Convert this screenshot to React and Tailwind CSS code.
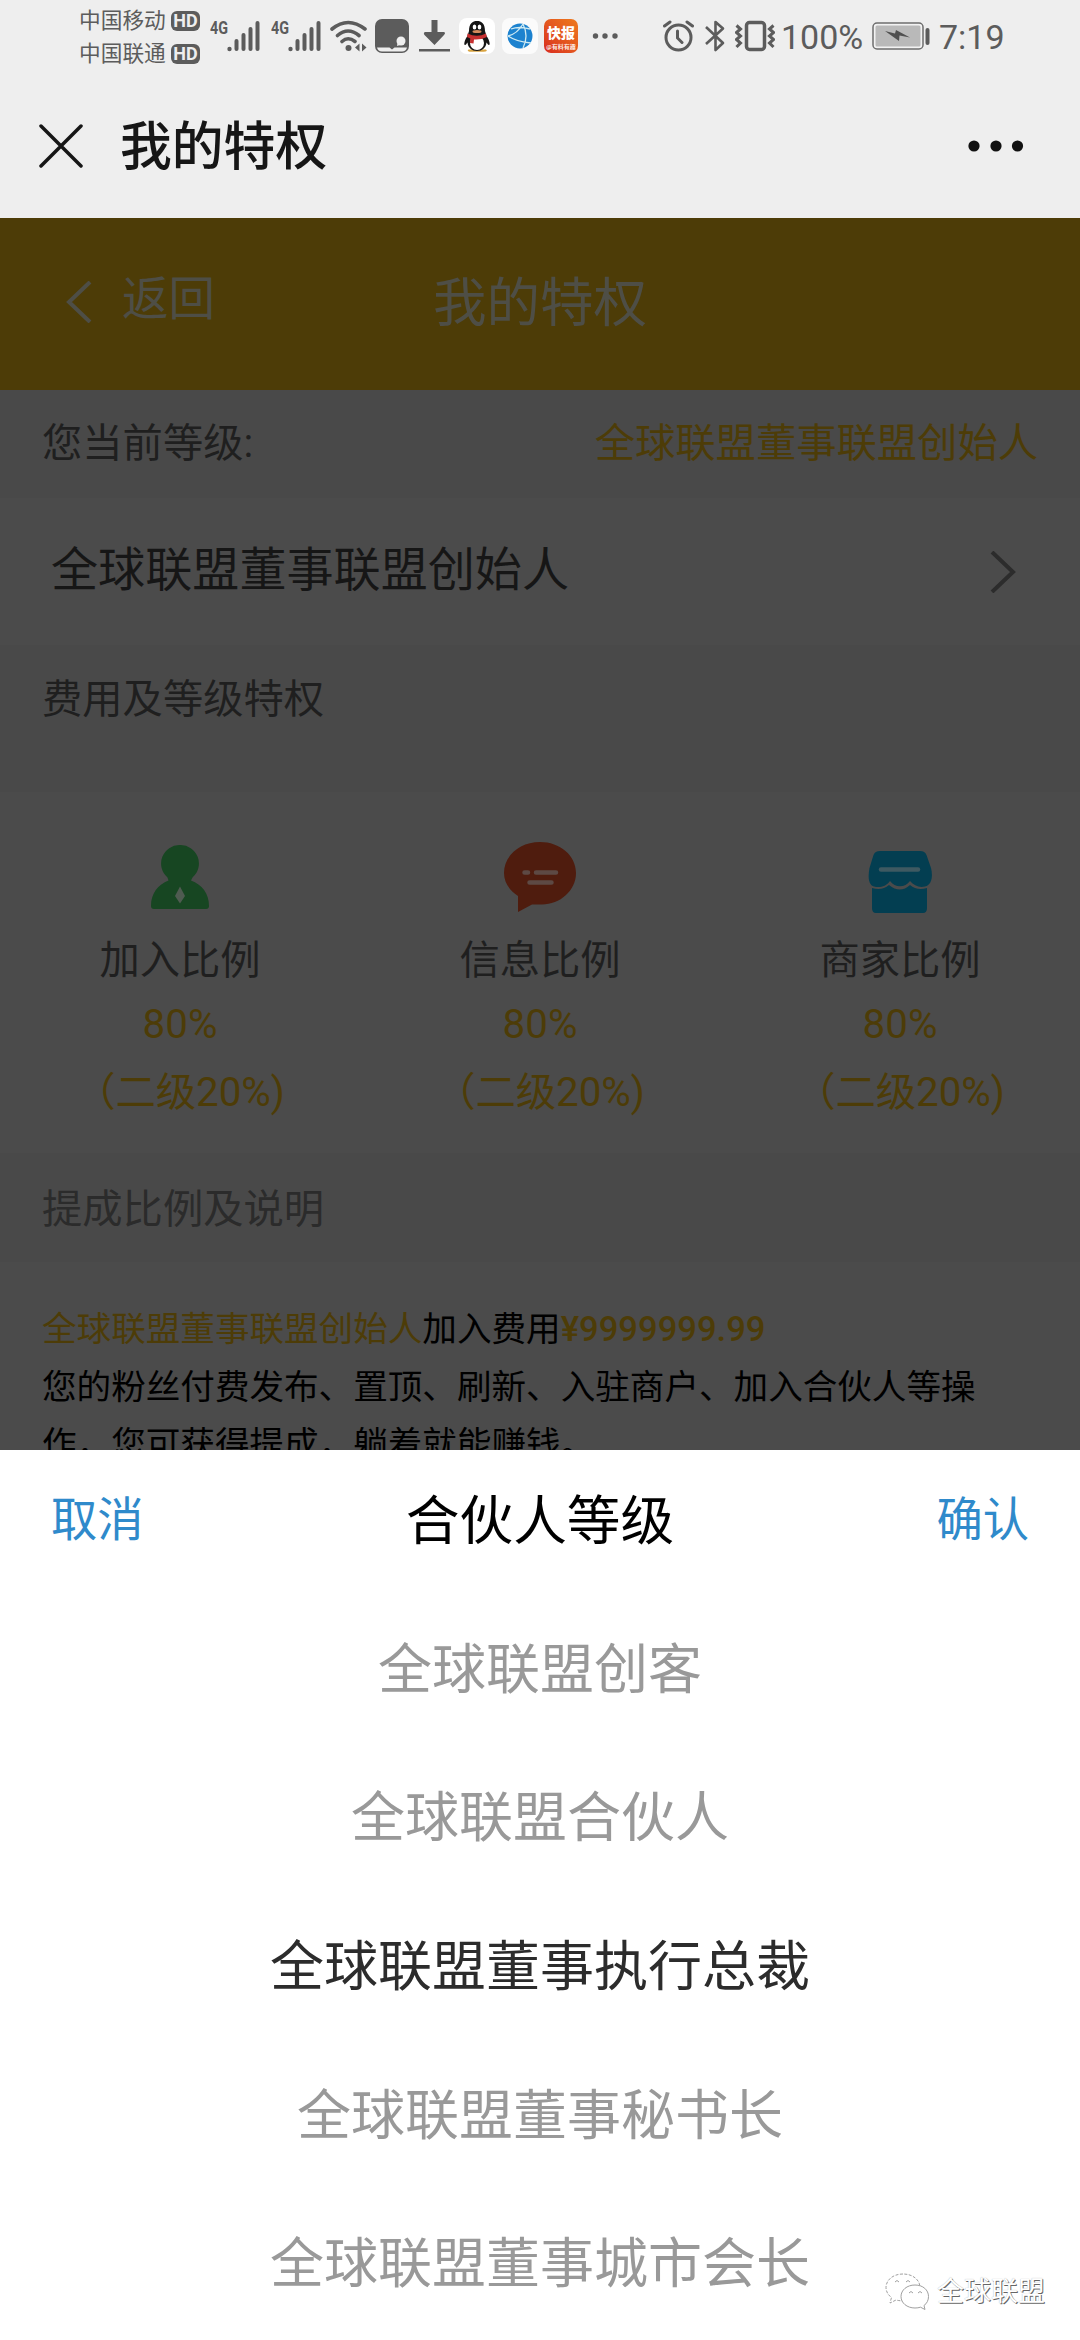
import React, { useState } from "react";
import clsx from "clsx";

const LEVELS = ["全球联盟创客", "全球联盟合伙人", "全球联盟董事执行总裁", "全球联盟董事秘书长", "全球联盟董事城市会长"];

const HdBadge = () => (
  <span className="flex h-[20px] w-[29px] items-center justify-center rounded-[6px] bg-[#5c5c5c] text-[18px] leading-none font-bold text-[#eee]">
    HD
  </span>
);

const Signal = () => (
  <svg width="51" height="44" viewBox="0 -6 51 44" fill="#5c5c5c">
    <text x="0" y="14" fontSize="19" fontWeight="700" textLength="18" lengthAdjust="spacingAndGlyphs">
      4G
    </text>
    <circle cx="19.5" cy="29" r="2.2" />
    <path d="M26.5 29V21M33.5 29V15M40.500 29V9M47.500 29V3" stroke="#5c5c5c" strokeWidth="4" strokeLinecap="round" />
  </svg>
);

const WifiIcon = () => (
  <svg width="37" height="32" viewBox="0 0 37 32" fill="none" stroke="#5c5c5c" strokeWidth="3.600" strokeLinecap="round">
    <path d="M2 9Q18 -4 35 9M7.500 15.500Q18 6.500 29 15.500M12 21.500Q18 16 25 21.500" />
    <circle cx="18.500" cy="28" r="3" fill="#5c5c5c" stroke="none" />
    <path d="M29.500 23.500v8l-4.500-4zM32 23.500v8l4.500-4z" fill="#5c5c5c" stroke="none" />
  </svg>
);

const CardIcon = () => (
  <svg width="34" height="34" viewBox="0 0 34 34">
    <rect width="34" height="34" rx="7" fill="#5c5c5c" />
    <path d="M2 28.500h12.500l2.500 2 2.500-2H32q-1 4-5 4H7q-4 0-5-4z" fill="#eee" />
    <circle cx="26" cy="22" r="4.500" fill="#eee" />
    <path d="M22.500 24l-.5 3 3-1z" fill="#eee" />
  </svg>
);

const DownloadIcon = () => (
  <svg width="31" height="32" viewBox="0 0 31 32" fill="#5c5c5c">
    <path d="M12.500 0h6v12H25q2 1 0 3l-9.500 10L5.500 15q-1.500-2 .5-3h6.500zM0 29h31v2.500H0z" />
  </svg>
);

const QqIcon = () => (
  <svg width="36" height="36" viewBox="0 0 36 36">
    <rect width="36" height="36" rx="8" fill="#fff" />
    <path d="M13 31.500h-3.500q-2 1.500 1 2.200h14q5-.2 2.500-2.200z" fill="#d9a441" />
    <path d="M10 13C10 5.500 13.500 3 18 3s8 2.500 8 10l1.500 5c3 4 4 9 2.500 9-1 0-2-2-2.500-2.500C27 30 23 33 18 33S9 30 8.500 24.500C8 25 7 27 6 27c-1.500 0-.5-5 2.500-9z" fill="#151515" />
    <ellipse cx="18" cy="25" rx="7" ry="7" fill="#fff" />
    <ellipse cx="15.500" cy="9" rx="1.800" ry="2.500" fill="#fff" />
    <ellipse cx="20.500" cy="9" rx="1.800" ry="2.500" fill="#fff" />
    <ellipse cx="18" cy="13.500" rx="4.500" ry="1.500" fill="#d48a5c" />
    <path d="M8.500 15.500Q18 20 27 15.500l.8 3.500Q22 22 15 21.500l-.5 4-3.500-.5.300-4.500-3.300-1.500z" fill="#c62f2f" />
  </svg>
);

const BrowserIcon = () => (
  <svg width="36" height="36" viewBox="0 0 36 36">
    <rect width="36" height="36" rx="8" fill="#fbfbfb" />
    <circle cx="18" cy="18" r="12.500" fill="#1c82cf" />
    <path d="M9 11Q17 8 28 11M6 18Q15 16 21 6M6 18Q15 24 29 25M21 6Q27 18 21 30" stroke="#cfeaf2" strokeWidth="1.300" fill="none" />
  </svg>
);

const AlarmIcon = () => (
  <svg width="31" height="32" viewBox="0 0 31 32" fill="none" stroke="#5c5c5c" strokeWidth="3" strokeLinecap="round">
    <circle cx="15.500" cy="17.500" r="12.500" />
    <path d="M14.500 11v7l4.500 4.500M1.500 6L7 2M29.500 6L24 2" />
  </svg>
);

const BluetoothIcon = () => (
  <svg width="20" height="32" viewBox="0 0 20 32" fill="none" stroke="#5c5c5c" strokeWidth="2.600" strokeLinejoin="round">
    <path d="M1 7l17 16-7.500 7V2L18 8.500 1 24" />
  </svg>
);

const VibrateIcon = () => (
  <svg width="40" height="32" viewBox="0 0 40 32" fill="none" stroke="#5c5c5c">
    <rect x="11.500" y="2.500" width="18" height="27" rx="3" strokeWidth="3.500" />
    <path d="M1.500 5.500l4 3.500-4 3.500 4 3.500-4 3.500 4 3.500-4 4M38.500 5.500l-4 3.500 4 3.500-4 3.500 4 3.500-4 3.500 4 4" strokeWidth="3" />
  </svg>
);

const BatteryIcon = () => (
  <svg width="58" height="28" viewBox="0 0 58 28">
    <rect x="1" y="1" width="50" height="26" rx="4" fill="#f2f2f2" stroke="#6d6d6d" strokeWidth="1.500" />
    <rect x="3.500" y="3.500" width="45" height="21" rx="1.500" fill="#b9b9b9" />
    <path d="M13 9l10 2.500L24 8l14 7.500-10.500-2L27 19z" fill="#505050" />
    <rect x="53.500" y="6" width="4" height="17" rx="2" fill="#5c5c5c" />
  </svg>
);

const StatusBar = () => (
  <div className="flex h-[73px] items-start pl-[79px] text-[#5c5c5c]">
    <div className="w-[131px] pt-[4px]">
      {["中国移动", "中国联通"].map((carrier) => (
        <div key={carrier} className="flex h-[33px] items-center gap-[5px] text-[21.700px] leading-[33px]">
          <span className="w-[87px] whitespace-nowrap">{carrier}</span>
          <HdBadge />
        </div>
      ))}
    </div>
    <div className="flex h-[72px] items-center">
      <Signal />
      <div className="ml-[10px]"><Signal /></div>
      <div className="ml-[8px]"><WifiIcon /></div>
      <div className="ml-[8px]"><CardIcon /></div>
      <div className="ml-[10px]"><DownloadIcon /></div>
      <div className="ml-[9px]"><QqIcon /></div>
      <div className="ml-[7px]"><BrowserIcon /></div>
      <div className="ml-[6px] flex h-[34px] w-[34px] flex-col items-center rounded-[7px] bg-linear-to-bl from-[#ee7a1c] to-[#d8281f] pt-[5px] text-white">
        <span className="text-[14px] leading-[19px] font-black whitespace-nowrap">快报</span>
        <span className="text-[6px] leading-[8px] font-medium whitespace-nowrap">@有料有趣</span>
      </div>
      <svg className="ml-[14px]" width="26" height="8" viewBox="0 0 26 8" fill="#5c5c5c">
        <circle cx="3.500" cy="4" r="2.700" />
        <circle cx="13" cy="4" r="2.700" />
        <circle cx="23" cy="4" r="2.700" />
      </svg>
      <div className="ml-[45px]"><AlarmIcon /></div>
      <div className="ml-[11px]"><BluetoothIcon /></div>
      <div className="ml-[10px]"><VibrateIcon /></div>
      <span className="ml-[6px] w-[81px] pt-[2px] text-[34px] leading-[40px]">100%</span>
      <div className="ml-[10px]"><BatteryIcon /></div>
      <span className="ml-[9px] pt-[2px] text-[34px] leading-[40px]">7:19</span>
    </div>
  </div>
);

const PersonIcon = () => (
  <svg width="58" height="65" viewBox="0 0 58 65">
    <path d="M29 0a18.500 18.500 0 0 1 12.500 32.500L40 35.500C51 40 58 48 58 61q0 3-3 3H3q-3 0-3-3C0 48 7 40 17.500 35.500l-1-3A18.500 18.500 0 0 1 29 0z" fill="#174622" />
    <path d="M29 41.500l5 9.500-5 7.500-5-7.500z" fill="#4f5b51" />
  </svg>
);

const MessageIcon = () => (
  <svg width="72" height="70" viewBox="0 0 72 70">
    <path d="M36 0c20 0 36 13.500 36 31S56 62.500 38 62.500H28L14 70V54C5 48 0 40 0 31 0 13.500 16 0 36 0z" fill="#4f1c0e" />
    <path d="M20.500 30.500h3.500M32 30.500h20M25.500 40.500h22" stroke="#5d4944" strokeWidth="4.500" strokeLinecap="round" />
  </svg>
);

const ShopIcon = () => (
  <svg width="64" height="63" viewBox="0 0 64 63">
    <path d="M12 0h40q5 0 6.500 4L63 17c2 8 1 17-6 18.500-6 1.500-11-1-15-5.500-5 7-15 7-20 0-4 6-11 7-16 5.500C0 34 0 25 1.500 17L5.500 4Q7 0 12 0z" fill="#033e51" />
    <path d="M4 37q10 3 17-3 11 9 21 0 7 6 17 3v20q0 5-4 5H8q-4 0-4-5z" fill="#033e51" />
    <path d="M13 18.500h37" stroke="#3e5961" strokeWidth="4.500" strokeLinecap="round" />
  </svg>
);

const RATIOS = [
  { label: "加入比例", icon: PersonIcon, iconClass: "pb-[16px]" },
  { label: "信息比例", icon: MessageIcon, iconClass: "pb-[14px]" },
  { label: "商家比例", icon: ShopIcon, iconClass: "pb-[12px]" },
];

const Watermark = () => (
  <div className="absolute right-[35px] bottom-[29px] flex items-center gap-[8px]">
    <svg width="44" height="38" viewBox="0 0 44 38" fill="#fff" stroke="#a0a0a0" strokeWidth="1">
      <path d="M18 1C8 1 1 7 1 14.500c0 4 2 7.500 5.500 10L5 30l6-3q4 1 8 .8C29 27 35 22 35 14.500 35 7 28 1 18 1z" strokeDasharray="3 1.5" />
      <path d="M30 12c-8 0-14 5-14 11.500S22 35 30 35q3 0 5.500-.8L40 36.500l-1-4c3-2 4.500-5.500 4.500-9C43.500 17 38 12 30 12z" />
      <path d="M10 9q2-3 4 0M21 9q2-3 4 0M24 20q2-3 4 0M33 20q2-3 4 0" fill="none" />
    </svg>
    <span className="text-[27px] leading-[36px] text-white [text-shadow:1px_1px_0_#666,0_0_1px_#aaa]">全球联盟</span>
  </div>
);

export default function App() {
  const [selected, setSelected] = useState(2);

  return (
    <div className="relative flex h-[2340px] w-[1080px] flex-col overflow-hidden bg-white font-['Roboto','Noto_Sans_CJK_SC',sans-serif]">
      <header className="h-[218px] shrink-0 bg-[#eee]">
        <StatusBar />
        <div className="flex h-[145px] items-center pl-[39px] text-[#161616]">
          <svg width="44" height="44" viewBox="0 0 44 44" stroke="#161616" strokeWidth="3.500" strokeLinecap="round">
            <path d="M2 2l40 40M42 2L2 42" />
          </svg>
          <h1 className="ml-[37px] pt-[5px] text-[51.800px] leading-[60px] font-medium">我的特权</h1>
          <svg className="mr-[56px] ml-auto" width="56" height="12" viewBox="0 0 56 12" fill="#111">
            <circle cx="6" cy="6" r="5.600" />
            <circle cx="28" cy="6" r="5.600" />
            <circle cx="49.500" cy="6" r="5.600" />
          </svg>
        </div>
      </header>

      <main className="flex h-[1232px] shrink-0 flex-col overflow-hidden bg-[#4b4b4b] text-[#1f1f1f]">
        <div className="grid h-[172px] shrink-0 grid-cols-3 items-center bg-[#4d3c07] text-[#4e4e46]">
          <div className="flex items-center pb-[4px] pl-[66px]">
            <svg width="26" height="42" viewBox="0 0 26 42" fill="none" stroke="#4e4e46" strokeWidth="4">
              <path d="M24 1L3 21l21 20" />
            </svg>
            <span className="ml-[30px] pb-[6px] text-[46.500px] leading-[60px]">返回</span>
          </div>
          <span className="text-center text-[53.500px] leading-[60px]">我的特权</span>
        </div>

        <div className="flex h-[108px] shrink-0 items-center justify-between bg-[#494949] px-[42px] text-[40.300px]">
          <span>您当前等级:</span>
          <span className="text-[#4d3c07]">全球联盟董事联盟创始人</span>
        </div>
        <div className="flex h-[147px] shrink-0 items-center justify-between pr-[64px] pl-[51px] text-[47.100px] text-[#161616]">
          <span className="pb-[3px]">全球联盟董事联盟创始人</span>
          <svg width="26" height="42" viewBox="0 0 26 42" fill="none" stroke="#2c2c2c" strokeWidth="4">
            <path d="M2 1l21 20L2 41" />
          </svg>
        </div>
        <div className="h-[147px] shrink-0 bg-[#494949] px-[42px] pt-[25px] text-[40.300px] leading-[60px]">费用及等级特权</div>

        <div className="grid h-[361px] shrink-0 grid-cols-3">
          {RATIOS.map(({ label, icon: Icon, iconClass }) => (
            <div key={label} className="flex flex-col items-center text-[40.300px]">
              <div className={clsx("flex h-[134px] items-end justify-center", iconClass)}>
                <Icon />
              </div>
              <span className="mt-[5px] leading-[60px]">{label}</span>
              <span className="mt-[1px] leading-[66px] text-[#4d3c07]">80%</span>
              <span className="mt-[1px] leading-[68px] text-[#4d3c07]">（二级20%)</span>
            </div>
          ))}
        </div>

        <div className="h-[109px] shrink-0 bg-[#494949] px-[42px] pt-[27px] text-[40.300px] leading-[60px] text-[#2b2b2b]">
          提成比例及说明
        </div>
        <div className="px-[42px] pt-[39px] text-[34.600px] leading-[57.600px] whitespace-nowrap text-black">
          <p>
            <span className="text-[#4d3c07]">全球联盟董事联盟创始人</span>加入费用<span className="font-medium text-[#4d3c07]">¥9999999.99</span>
          </p>
          <p>您的粉丝付费发布、置顶、刷新、入驻商户、加入合伙人等操</p>
          <p>作，您可获得提成，躺着就能赚钱。</p>
        </div>
      </main>

      <section className="h-[890px] shrink-0 bg-white">
        <div className="flex h-[146px] items-center justify-between px-[51px] text-[46.300px] text-[#2f8acb]">
          <button className="pb-[4px]">取消</button>
          <span className="pb-[1px] text-[53.700px] text-black">合伙人等级</span>
          <button className="pb-[4px]">确认</button>
        </div>
        <ul>
          {LEVELS.map((level, i) => (
            <li
              key={level}
              onClick={() => setSelected(i)}
              className={clsx(
                "flex h-[148.600px] items-center justify-center text-[54px]",
                i === selected ? "text-[#2c2c2c]" : "text-[#999]"
              )}
            >
              {level}
            </li>
          ))}
        </ul>
      </section>

      <Watermark />
    </div>
  );
}
